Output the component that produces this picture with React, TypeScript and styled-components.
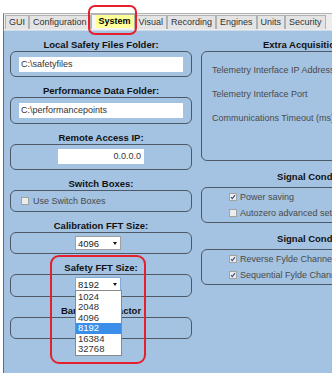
import React from 'react';
import styled, { createGlobalStyle, css } from 'styled-components';

const GlobalStyle = createGlobalStyle`
  html, body {
    margin: 0;
    padding: 0;
    background: #fff;
  }
  body {
    font-family: "Liberation Sans", Arial, sans-serif;
  }
`;

const Screen = styled.div`
  position: relative;
  width: 332px;
  height: 373px;
  overflow: hidden;
  background: #fff;
`;

const TabStrip = styled.div`
  display: flex;
  align-items: flex-end;
  box-sizing: border-box;
  margin: 13px 0 0 3px;
  height: 17px;
  padding: 0 0 1px 1px;
  background: #ededed;
  border-top: 1px solid #b4b4b4;
  border-left: 1px solid #7a7a7a;
`;

const Tab = styled.div<{ $active?: boolean }>`
  box-sizing: border-box;
  height: 14px;
  line-height: 13px;
  padding: 0 3px;
  font-size: 9px;
  color: #333;
  white-space: nowrap;
  background: #e4e4e4;
  border: 1px solid #b2b2b2;
  border-bottom: none;
  ${(p) =>
    p.$active &&
    css`
      height: 15px;
      padding: 0 0 0 4px;
      background: #f7f7f7;
      color: #000;
    `}
`;

const TabLabel = styled.span`
  display: inline-block;
  padding: 0 3px;
  background: #ffff99;
  font-weight: bold;
`;

const Panel = styled.div`
  display: grid;
  grid-template-columns: 182px 245px;
  column-gap: 9px;
  align-items: start;
  height: 343px;
  margin-left: 3px;
  padding: 7px 0 0 6px;
  background: #a4c2e1;
  border-left: 1px solid #5d6b7a;
  border-top: 1px solid #cfdcea;
`;

const Column = styled.div`
  display: flex;
  flex-direction: column;
`;

const Heading = styled.div<{ $gap?: number }>`
  margin-top: ${(p) => p.$gap ?? 7}px;
  line-height: 13px;
  font-size: 9.5px;
  font-weight: bold;
  color: #111;
  text-align: center;
  white-space: nowrap;
`;

const GroupBox = styled.div<{ $pad: string }>`
  display: flex;
  flex-direction: column;
  padding: ${(p) => p.$pad};
  border: 1px solid #4f5865;
  border-radius: 6px;
`;

const TextBox = styled.div<{ $width?: number; $right?: boolean }>`
  box-sizing: border-box;
  height: 15px;
  width: ${(p) => (p.$width ? `${p.$width}px` : 'auto')};
  align-self: ${(p) => (p.$width ? 'center' : 'stretch')};
  padding: 0 3px 0 2px;
  line-height: 15px;
  font-size: 9px;
  color: #333;
  text-align: ${(p) => (p.$right ? 'right' : 'left')};
  background: #fff;
`;

const SelectRow = styled.div`
  display: flex;
  justify-content: center;
  padding-right: 6px;
`;

const Select = styled.div<{ $focus?: boolean }>`
  position: relative;
  box-sizing: border-box;
  display: flex;
  align-items: center;
  justify-content: space-between;
  width: 46px;
  height: 14px;
  padding: 0 3px 0 2px;
  font-size: 9.5px;
  color: #222;
  background: #fff;
  border: 1px solid ${(p) => (p.$focus ? '#7fa9d8' : '#a0a0a0')};
`;

const Arrow = styled.span`
  width: 0;
  height: 0;
  border-left: 2.5px solid transparent;
  border-right: 2.5px solid transparent;
  border-top: 3px solid #111;
`;

const DropList = styled.div`
  position: absolute;
  top: 100%;
  left: -1px;
  z-index: 5;
  box-sizing: border-box;
  width: 47px;
  padding: 1px 0;
  background: #fff;
  border: 1px solid #8a8a8a;
`;

const DropItem = styled.div<{ $selected?: boolean }>`
  height: 10.4px;
  line-height: 10.4px;
  padding-left: 2px;
  font-size: 9.5px;
  color: ${(p) => (p.$selected ? '#fff' : '#333')};
  background: ${(p) => (p.$selected ? '#3b8fe8' : 'transparent')};
`;

const CheckRow = styled.div<{ $gap?: number }>`
  display: flex;
  align-items: center;
  gap: ${(p) => p.$gap ?? 3}px;
  height: 16px;
  font-size: 9px;
  color: #4a4a4a;
  white-space: nowrap;
`;

const Label = styled.div`
  height: 24px;
  line-height: 24px;
  font-size: 9px;
  color: #4a4a4a;
  white-space: nowrap;
`;

const Annotation = styled.div<{ $r: number }>`
  position: absolute;
  z-index: 10;
  box-sizing: border-box;
  border: 2px solid #e3202b;
  border-radius: ${(p) => p.$r}px;
  pointer-events: none;
`;

const Check = ({ on }: { on?: boolean }) => (
  <svg width="8" height="8" viewBox="0 0 8 8">
    <rect x="0.5" y="0.5" width="7" height="7" fill="#ececec" stroke="#a2a2a2" />
    {on && <path d="M2 4.2 L3.3 5.6 L6 2.2" fill="none" stroke="#2f4d86" strokeWidth="1.1" />}
  </svg>
);

const tabs = ['GUI', 'Configuration', 'System', 'Visual', 'Recording', 'Engines', 'Units', 'Security'];
const sizes = ['1024', '2048', '4096', '8192', '16384', '32768'];

export default function App() {
  return (
    <Screen>
      <GlobalStyle />
      <TabStrip>
        {tabs.map((t) =>
          t === 'System' ? (
            <Tab key={t} $active>
              <TabLabel>{t}</TabLabel>
            </Tab>
          ) : (
            <Tab key={t}>{t}</Tab>
          )
        )}
      </TabStrip>
      <Panel>
        <Column>
          <Heading $gap={0}>Local Safety Files Folder:</Heading>
          <GroupBox $pad="5px 8px 4px">
            <TextBox>C:\safetyfiles</TextBox>
          </GroupBox>
          <Heading>Performance Data Folder:</Heading>
          <GroupBox $pad="5px 8px">
            <TextBox>C:\performancepoints</TextBox>
          </GroupBox>
          <Heading>Remote Access IP:</Heading>
          <GroupBox $pad="4px 8px 5px">
            <TextBox $width={86} $right>
              0.0.0.0
            </TextBox>
          </GroupBox>
          <Heading>Switch Boxes:</Heading>
          <GroupBox $pad="2px 10px 2px">
            <CheckRow $gap={4}>
              <Check />
              Use Switch Boxes
            </CheckRow>
          </GroupBox>
          <Heading>Calibration FFT Size:</Heading>
          <GroupBox $pad="3px 0">
            <SelectRow>
              <Select>
                4096
                <Arrow />
              </Select>
            </SelectRow>
          </GroupBox>
          <Heading>Safety FFT Size:</Heading>
          <GroupBox $pad="2px 0 5px">
            <SelectRow>
              <Select $focus>
                8192
                <Arrow />
                <DropList>
                  {sizes.map((s) => (
                    <DropItem key={s} $selected={s === '8192'}>
                      {s}
                    </DropItem>
                  ))}
                </DropList>
              </Select>
            </SelectRow>
          </GroupBox>
          <Heading>Bandwidth Factor</Heading>
          <GroupBox $pad="10px 0" />
        </Column>
        <Column>
          <Heading $gap={0}>Extra Acquisition Settings:</Heading>
          <GroupBox $pad="6px 10px 30px">
            <Label>Telemetry Interface IP Address</Label>
            <Label>Telemetry Interface Port</Label>
            <Label>Communications Timeout (ms)</Label>
          </GroupBox>
          <Heading $gap={9} style={{ marginBottom: 4 }}>
            Signal Conditioning:
          </Heading>
          <GroupBox $pad="1px 27px">
            <CheckRow>
              <Check on />
              Power saving
            </CheckRow>
            <CheckRow>
              <Check />
              Autozero advanced settings
            </CheckRow>
          </GroupBox>
          <Heading $gap={9} style={{ marginBottom: 4 }}>
            Signal Conditioning:
          </Heading>
          <GroupBox $pad="1px 27px">
            <CheckRow>
              <Check on />
              Reverse Fylde Channel Order
            </CheckRow>
            <CheckRow>
              <Check on />
              Sequential Fylde Channels
            </CheckRow>
          </GroupBox>
        </Column>
      </Panel>
      <Annotation $r={7} style={{ left: 88, top: 5, width: 49, height: 30 }} />
      <Annotation $r={9} style={{ left: 50, top: 255, width: 96, height: 109 }} />
    </Screen>
  );
}
